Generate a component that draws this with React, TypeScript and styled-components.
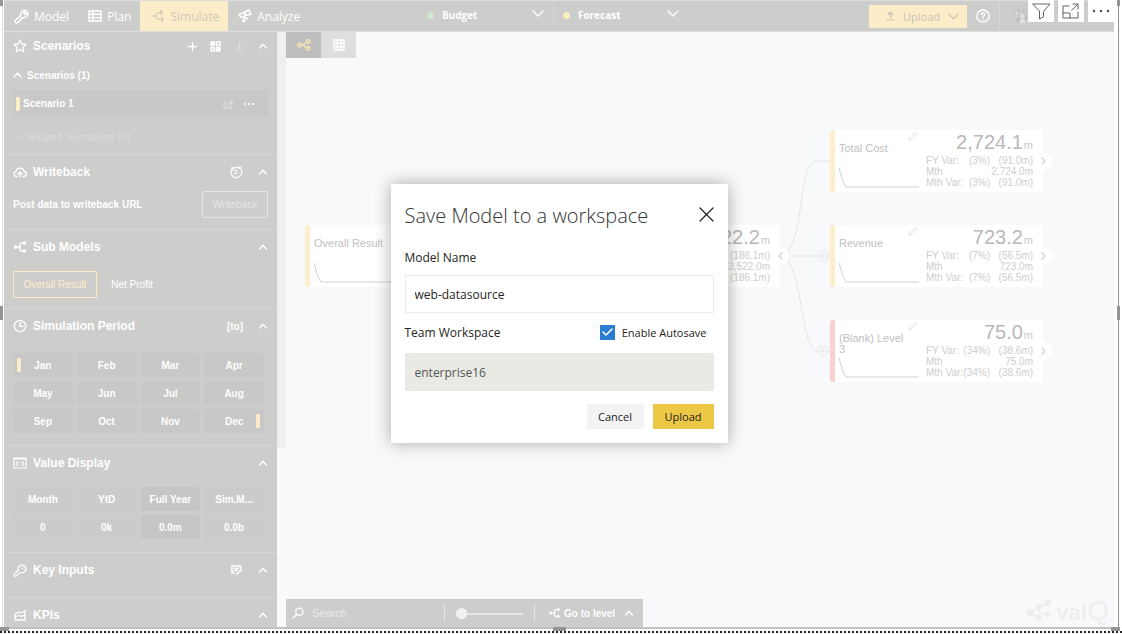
import React from "react";
import styled, { createGlobalStyle } from "styled-components";

const sans = '"Liberation Sans", Arial, sans-serif';
const humanist = '"Open Sans", "Noto Sans", sans-serif';
const grey = "#cdcdcc";
const cream = "#fcedc8";

const Global = createGlobalStyle`
  *, *::before, *::after { box-sizing: border-box; }
  html, body { margin: 0; height: 100%; background: #fff; }
  body { font-family: ${sans}; overflow: hidden; }
  button, input, select { font: inherit; color: inherit; margin: 0; border-radius: 0; }
  button { border: 0; background: none; padding: 0; }
  h1, h2 { margin: 0; }
`;

/* ---------- frame around the visual ---------- */

const Frame = styled.div`
  position: relative;
  display: flex;
  flex-direction: column;
  height: 100vh;
  padding-right: 3px;
`;
const Bordered = styled.div`
  flex: 1;
  min-height: 0;
  display: flex;
  margin-left: 2px;
  padding: 0 4px 0 1px;
  border-left: 1px solid #dcdcdc;
  border-right: 1px solid #8f8f8f;
  border-bottom: 2px solid #c2c2c2;
`;
const DottedEdge = styled.div`
  height: 5px;
  margin-right: -3px;
  border-bottom: 1px solid #fff;
  background: repeating-linear-gradient(90deg, #222 0 2px, #fff 2px 4px) 0 2px / 100% 2px no-repeat;
`;
const Handle = styled.i<{ $x: "left" | "center" | "right"; $y: "top" | "center" | "bottom" }>`
  position: absolute;
  background: #949494;
  width: ${(p) => (p.$y === "bottom" ? (p.$x === "center" ? 13 : 9) : 3)}px;
  height: ${(p) => (p.$y === "bottom" ? 4 : p.$y === "top" ? 6 : 14)}px;
  ${(p) => (p.$x === "left" ? "left: 0;" : p.$x === "right" ? "right: 2px;" : "left: calc(50% - 8px);")}
  ${(p) => (p.$y === "top" ? "top: 0;" : p.$y === "bottom" ? "bottom: 3px;" : "top: calc(50% - 11px);")}
`;
const Visual = styled.div`
  position: relative;
  flex: 1;
  min-width: 0;
  display: flex;
  flex-direction: column;
  overflow: hidden;
  background: #f8f9fb;
`;

/* ---------- top bar ---------- */

const TopBar = styled.header`
  flex: none;
  display: flex;
  align-items: stretch;
  height: 32px;
  background: ${grey};
  border-top: 1px solid #dcdcda;
  border-bottom: 1px solid #dededc;
  color: #fff;
  font-family: ${humanist};
  font-size: 12px;
`;
const Tabs = styled.nav`
  display: flex;
`;
const Tab = styled.button<{ $active?: boolean }>`
  display: flex;
  align-items: center;
  gap: 5px;
  padding: 0 9px 0 ${(p) => (p.$active ? 11 : 10)}px;
  background: ${(p) => (p.$active ? cream : "transparent")};
  color: ${(p) => (p.$active ? "#cfc9b8" : "#fff")};
`;
const Spacer = styled.div<{ $grow: number }>`
  flex: ${(p) => p.$grow};
`;
const Series = styled.label`
  display: flex;
  align-items: center;
  gap: 8px;
  margin: 5px 0 7px;
  padding-left: 9px;
  width: 135px;
  font-size: 10px;
  font-weight: 700;
  & + & { border-left: 1px solid #d6d6d4; }
`;
const Dot = styled.span<{ $color: string }>`
  width: 7px;
  height: 7px;
  border-radius: 50%;
  background: ${(p) => p.$color};
`;
const SeriesSelect = styled.select`
  flex: 1;
  appearance: none;
  border: 0;
  padding: 0;
  background: none;
`;
const SeriesArrow = styled.span`
  display: flex;
  margin: 0 9px 4px 0;
`;
const UploadMenu = styled.button`
  display: flex;
  align-items: center;
  justify-content: space-between;
  align-self: center;
  width: 98px;
  height: 23px;
  padding: 0 8px 0 17px;
  background: ${cream};
  color: #c8c4b8;
  font-size: 11px;
`;
const IconButton = styled.button`
  display: flex;
  align-items: center;
  justify-content: center;
`;
const HelpButton = styled(IconButton)`
  margin-left: 9px;
`;
const Account = styled.div`
  display: flex;
  align-items: center;
  margin: 2px 0 2px 9px;
  padding-left: 13px;
  width: 115px;
  border-left: 1px solid #d6d6d4;
`;
const VisualActions = styled.div`
  position: absolute;
  top: 0;
  right: 0;
  display: flex;
  gap: 4px;
`;
const VisualAction = styled.button`
  display: flex;
  align-items: center;
  justify-content: center;
  width: 26px;
  height: 22px;
  background: #fff;
`;

/* ---------- side panel ---------- */

const Body = styled.div`
  flex: 1;
  min-height: 0;
  display: flex;
`;
const Side = styled.aside`
  flex: none;
  width: 273px;
  overflow: hidden;
  background: ${grey};
  color: #fff;
  font-size: 10px;
  font-weight: 700;
`;
const Track = styled.div`
  flex: none;
  width: 9px;
  background: linear-gradient(#efefef 70%, #fafafa 70%);
`;
const Section = styled.section<{ $pad: number }>`
  padding: 0 9px ${(p) => p.$pad}px;
  border-bottom: 1px solid #d7d7d6;
`;
const SectionHead = styled.div<{ $compact?: boolean }>`
  display: flex;
  align-items: center;
  height: ${(p) => (p.$compact ? 28 : 34)}px;
  gap: 6px;
  h2 { flex: 1; font-size: 12px; font-weight: 700; }
`;
const HeadTools = styled.div`
  display: flex;
  align-items: center;
  gap: 12px;
`;
const WideTool = styled(IconButton)`
  margin-right: 3px;
`;
const Group = styled.button<{ $dim?: boolean }>`
  display: flex;
  align-items: center;
  gap: 5px;
  height: 30px;
  font-size: ${(p) => (p.$dim ? 11 : 10)}px;
  color: ${(p) => (p.$dim ? "#dcdcdb" : "#fff")};
  font-weight: ${(p) => (p.$dim ? 400 : 700)};
`;
const Scenario = styled.div`
  display: flex;
  align-items: center;
  gap: 3px;
  height: 27px;
  margin-bottom: 5px;
  padding: 0 13px 0 3px;
  background: #c8c8c8;
  span { flex: 1; }
`;
const ScenarioTools = styled.div`
  display: flex;
  gap: 9px;
`;
const Marker = styled.i`
  width: 4px;
  height: 14px;
  border-radius: 1px;
  background: ${cream};
`;
const Row = styled.div`
  display: flex;
  align-items: center;
  justify-content: space-between;
  padding-top: 2px;
  p { margin: 0; font-size: 10px; }
`;
const Outline = styled.button`
  width: 66px;
  height: 27px;
  border: 1px solid #e6e6e5;
  border-radius: 2px;
  color: #e6e6e5;
  font-weight: 400;
`;
const Models = styled.div`
  display: flex;
  padding-top: 7px;
`;
const ModelChoice = styled.button<{ $on?: boolean }>`
  width: ${(p) => (p.$on ? 84 : 70)}px;
  height: 27px;
  border: 1px solid ${(p) => (p.$on ? cream : "transparent")};
  border-radius: 1px;
  color: ${(p) => (p.$on ? cream : "#fff")};
  font-weight: 400;
`;
const Grid = styled.div<{ $top: number }>`
  display: grid;
  grid-template-columns: repeat(4, 1fr);
  gap: 4px;
  padding: ${(p) => p.$top}px 4px 0 0;
`;
const Cell = styled.button<{ $on?: boolean; $soft?: boolean }>`
  position: relative;
  height: 24px;
  border-radius: 2px;
  background: ${(p) => (p.$on ? "#c6c6c6" : p.$soft ? "#cbcbcb" : "#c8c8c8")};
  font-size: 10px;
  ${Marker} { position: absolute; top: 5px; }
`;
const StartMarker = styled(Marker)`
  left: 4px;
`;
const EndMarker = styled(Marker)`
  right: 4px;
`;

/* ---------- canvas ---------- */

const Main = styled.main`
  flex: 1;
  min-width: 0;
  display: flex;
  flex-direction: column;
`;
const ViewSwitch = styled.div`
  display: flex;
  flex: none;
`;
const View = styled.button<{ $on?: boolean }>`
  display: flex;
  align-items: center;
  justify-content: center;
  width: 35px;
  height: 26px;
  background: ${(p) => (p.$on ? "#bdbdbd" : "#dedede")};
`;
const Canvas = styled.div`
  position: relative;
  flex: 1;
  min-height: 0;
`;
const Links = styled.svg`
  position: absolute;
  left: 0;
  top: 0;
  overflow: visible;
`;
const NodeBox = styled.article<{ $bar: string }>`
  position: absolute;
  display: flex;
  width: 213px;
  height: 62px;
  padding: 0 10px 0 4px;
  border-left: 5px solid ${(p) => p.$bar};
  border-radius: 3px;
  background: #fff;
  color: #bfbfbf;
`;
const NodeLeft = styled.div`
  width: 80px;
  margin-right: 7px;
  padding: 13px 8px 0 0;
  font-size: 11px;
  line-height: 11px;
`;
const NodeRight = styled.div`
  flex: 1;
  font-size: 10px;
  line-height: 11px;
  color: #cecece;
`;
const Total = styled.div`
  text-align: right;
  font-size: 20px;
  line-height: 25px;
  height: 25px;
  color: #b8b8b8;
  small { font-size: 11px; color: #c8c8c8; margin-left: 1px; }
`;
const Figures = styled.dl`
  display: grid;
  grid-template-columns: 1fr auto 43px;
  margin: 0;
  white-space: nowrap;
  dt { grid-column: 1; width: 34px; }
  dd { margin: 0; text-align: right; }
`;
const Percent = styled.dd`
  grid-column: 2;
`;
const Month = styled.dd`
  grid-column: 2 / 4;
`;
const Pencil = styled.span`
  position: absolute;
  left: 73px;
  top: 1px;
  display: flex;
`;
const Expander = styled.button`
  position: absolute;
  right: -9px;
  top: 22px;
  display: flex;
  align-items: center;
  justify-content: center;
  width: 18px;
  height: 18px;
  border-radius: 50%;
  background: #fff;
`;
const Bottom = styled.footer`
  flex: none;
  display: flex;
  justify-content: space-between;
  padding-right: 5px;
`;
const Tools = styled.div`
  display: flex;
  align-items: center;
  height: 28px;
  width: 357px;
  background: ${grey};
  color: #fff;
  font-size: 11px;
  font-weight: 700;
`;
const SearchBox = styled.label`
  display: flex;
  align-items: center;
  gap: 8px;
  width: 159px;
  height: 18px;
  padding-left: 6px;
  border-right: 1px solid #e6e6e6;
  input {
    width: 110px;
    border: 0;
    padding: 0;
    background: none;
    font-weight: 400;
    outline: 0;
  }
  input::placeholder { color: #e8e8e8; opacity: 1; }
`;
const ZoomBox = styled.label`
  display: flex;
  align-items: center;
  width: 90px;
  height: 18px;
  padding: 0 11px;
  border-right: 1px solid #e6e6e6;
`;
const Range = styled.input`
  appearance: none;
  width: 67px;
  height: 11px;
  background: linear-gradient(#e6e6e6, #e6e6e6) 0 5px / 100% 2px no-repeat;
  &::-webkit-slider-thumb {
    appearance: none;
    width: 11px;
    height: 11px;
    border-radius: 50%;
    background: #f2f2f2;
  }
`;
const LevelButton = styled.button`
  display: flex;
  align-items: center;
  gap: 4px;
  padding-left: 14px;
  font-size: 10px;
  svg:last-child { margin-left: 5px; }
`;
const Logo = styled.div`
  display: flex;
  align-items: center;
  gap: 4px;
  height: 24px;
  color: #edeef0;
  font-family: ${humanist};
  font-size: 22px;
  line-height: 24px;
  font-weight: 600;
  b { font-family: ${sans}; font-size: 28px; line-height: 24px; font-weight: 400; }
`;
const Wordmark = styled.span`
  display: flex;
  align-items: center;
`;

/* ---------- dialog ---------- */

const Overlay = styled.div`
  position: absolute;
  inset: 0;
  display: flex;
  align-items: center;
  justify-content: center;
`;
const Dialog = styled.form`
  width: 337px;
  padding: 14px;
  background: #fff;
  box-shadow: 0 0 16px rgba(0, 0, 0, 0.32);
  color: #252423;
  font-family: ${humanist};
  font-size: 12px;
`;
const DialogHead = styled.div`
  display: flex;
  justify-content: space-between;
  height: 36px;
  h1 { font-size: 20px; line-height: 36px; font-weight: 300; color: #333; }
  button { height: 32px; }
`;
const Line = styled.div`
  display: flex;
  align-items: center;
  justify-content: space-between;
  height: 38px;
  margin-bottom: 2px;
`;
const NameLine = styled(Line)`
  padding-top: 8px;
  margin-bottom: 3px;
`;
const Field = styled.input`
  display: block;
  width: 100%;
  height: 38px;
  padding: 0 9px;
  border: 1px solid #ececec;
  outline: 0;
  &:read-only {
    background: #e9eae4;
    border-color: #e9eae4;
    color: #555;
  }
`;
const Check = styled.label`
  display: flex;
  align-items: center;
  gap: 7px;
  padding-right: 7px;
  font-size: 11px;
  input {
    appearance: none;
    width: 15px;
    height: 15px;
    background: #2b7cd3;
  }
  span { position: relative; display: flex; }
  svg { position: absolute; left: 2px; top: 3px; pointer-events: none; }
`;
const Actions = styled.div`
  display: flex;
  justify-content: flex-end;
  gap: 9px;
  margin-top: 13px;
`;
const Action = styled.button<{ $primary?: boolean }>`
  width: ${(p) => (p.$primary ? 61 : 57)}px;
  height: 25px;
  font-size: 11px;
  background: ${(p) => (p.$primary ? "#ecc846" : "#f3f3f3")};
`;

/* ---------- icons ---------- */

type IconProps = { d?: string; w?: number; h?: number; box?: string; color?: string; sw?: number; children?: React.ReactNode };
const Icon = ({ d, w = 14, h = w, box = `0 0 ${w} ${h}`, color = "currentColor", sw = 1, children }: IconProps) => (
  <svg width={w} height={h} viewBox={box} fill="none" stroke={color} strokeWidth={sw} strokeLinecap="round" strokeLinejoin="round" aria-hidden="true">
    {d && <path d={d} />}
    {children}
  </svg>
);
const Up = () => <Icon w={10} h={6} d="M1.5 5L5 1.2L8.5 5" sw={1.3} />;
const Down = ({ w = 12 }: { w?: number }) => <Icon w={w} h={7} box="0 0 12 7" d="M1 1L6 6L11 1" sw={1.4} />;
const Wrench = () => (
  <Icon w={15} sw={1.5} d="M1.3 11.3L6.6 6.8C6.1 3.3 8.8.8 12.2 1.4L9.7 4L11 5.6L14 3.3C14.4 7 11.8 9.2 8.6 8.5L4 13.6C2 14.6.5 13.1 1.3 11.3Z" />
);
const Key = () => (
  <Icon w={14} h={13} sw={1.3} d="M1 12V10.4L5.2 6.2A4 3.8 0 1 1 7.4 8.4L5.8 9.6L3 12.2Z">
    <path d="M9 4.2H9.6" />
  </Icon>
);
const Share = ({ color = "currentColor" }: { color?: string }) => (
  <Icon w={14} h={12} color={color} sw={1.4}>
    <circle cx="2.5" cy="6" r="1.7" />
    <circle cx="11.3" cy="2.5" r="1.7" />
    <circle cx="11.3" cy="9.5" r="1.7" />
    <path d="M4.2 6H6L9.6 3M6 6L9.6 9" />
  </Icon>
);
const Branch = ({ w = 13 }: { w?: number }) => (
  <Icon w={w} h={12} box="0 0 13 12" sw={1.4}>
    <circle cx="2" cy="6" r="1.2" fill="currentColor" />
    <path d="M2 6H6.5M10 2H8.5Q6.5 2 6.5 4V8Q6.5 10 8.5 10H10" />
    <circle cx="11" cy="2" r="1" fill="currentColor" />
    <circle cx="11" cy="10" r="1" fill="currentColor" />
  </Icon>
);

/* ---------- pieces ---------- */

const PanelHead = ({ icon, title, tools, compact }: { icon: React.ReactNode; title: string; tools?: React.ReactNode; compact?: boolean }) => (
  <SectionHead $compact={compact}>
    {icon}
    <h2>{title}</h2>
    <HeadTools>
      {tools}
      <IconButton aria-label={`Collapse ${title}`}><Up /></IconButton>
    </HeadTools>
  </SectionHead>
);

type NodeData = { x: number; y: number; bar?: string; name?: string; value?: string; pct?: string; variance?: string; month?: string; open?: boolean; leaf?: boolean };
const nodes: NodeData[] = [
  { x: 19, y: 167, name: "Overall Result", leaf: true },
  { x: 281, y: 167, value: "22.2", variance: "(186.1m)", month: "3,522.0m", open: true },
  { x: 544, y: 72, name: "Total Cost", value: "2,724.1", pct: "(3%)", variance: "(91.0m)", month: "2,724.0m" },
  { x: 544, y: 167, name: "Revenue", value: "723.2", pct: "(7%)", variance: "(56.5m)", month: "723.0m" },
  { x: 544, y: 262, name: "(Blank) Level 3", value: "75.0", pct: "(34%)", variance: "(38.6m)", month: "75.0m", bar: "#fad0cf" },
];

const TreeNode = ({ n }: { n: NodeData }) => (
  <NodeBox $bar={n.bar ?? "#fdefcb"} style={{ left: n.x, top: n.y }}>
    <NodeLeft>{n.name}</NodeLeft>
    <Links width="90" height="62">
      <path d="M4 38C6 44 7 52 11 57H84" fill="none" stroke="#d0d2d2" />
    </Links>
    {n.value && (
      <>
        <Pencil><Icon w={10} color="#e2e2e2" d="M1 9L2 6.5L7.5 1L9 2.5L3.5 8Z" /></Pencil>
        <NodeRight>
          <Total>{n.value}<small>m</small></Total>
          <Figures>
            {n.pct && <dt>FY Var:</dt>}
            <Percent>{n.pct}</Percent>
            <dd>{n.variance}</dd>
            {n.pct && <dt>Mth</dt>}
            <Month>{n.month}</Month>
            {n.pct && <dt>Mth Var:</dt>}
            <Percent>{n.pct}</Percent>
            <dd>{n.variance}</dd>
          </Figures>
        </NodeRight>
      </>
    )}
    {!n.leaf && (
      <Expander aria-label="Toggle children">
        <Icon w={5} h={8} color="#cfcfcf" sw={1.2} d={n.open ? "M4 1L1 4L4 7" : "M1 1L4 4L1 7"} />
      </Expander>
    )}
  </NodeBox>
);

const months = ["Jan", "Feb", "Mar", "Apr", "May", "Jun", "Jul", "Aug", "Sep", "Oct", "Nov", "Dec"];
const displays = ["Month", "YtD", "Full Year", "Sim.M...", "0", "0k", "0.0m", "0.0b"];

export default function App() {
  return (
    <Frame>
      <Global />
      <Bordered>
        <Visual>
          <TopBar>
            <Tabs>
              <Tab><Wrench />Model</Tab>
              <Tab>
                <Icon w={14} h={12} sw={1.4} d="M1 1H13V11H1ZM1 4.3H13M1 7.6H13M5 1V11" />
                Plan
              </Tab>
              <Tab $active>
                <Icon w={14} sw={1.2} d="M1 7H5M5 7Q5 3.5 8.5 3.5H11M5 7Q5 10.5 8.5 10.5H12M9.5 1.5L11.5 3.5L9.5 5.5M10.5 8.5L12.5 10.5L10.5 12.5" />
                Simulate
              </Tab>
              <Tab>
                <Icon w={14} sw={1.5} d="M1 5.5L3 8.5L7.5 6.5L6.2 3.5ZM6.2 3.5L10.8 1L13 5.3L7.5 6.5M6.5 7.5V13M6.5 9L4.5 12.5M7 8.5L9.5 10" />
                Analyze
              </Tab>
            </Tabs>
            <Spacer $grow={3} />
            <Series>
              <Dot $color="#d3e6d3" />
              <SeriesSelect aria-label="Primary series"><option>Budget</option></SeriesSelect>
              <SeriesArrow><Down /></SeriesArrow>
            </Series>
            <Series>
              <Dot $color="#fcedc0" />
              <SeriesSelect aria-label="Comparison series"><option>Forecast</option></SeriesSelect>
              <SeriesArrow><Down /></SeriesArrow>
            </Series>
            <Spacer $grow={5} />
            <UploadMenu>
              <Icon w={9} h={10} d="M4.5 7V1M2 3.5L4.5 1L7 3.5M1 9H8" sw={1.2} />
              Upload
              <Down w={11} />
            </UploadMenu>
            <HelpButton aria-label="Help">
              <Icon w={14} sw={1.5} d="M5.3 5.6Q5.3 4 7 4T8.7 5.5Q8.7 6.4 7 7.3V8M7 9.9V10">
                <circle cx="7" cy="7" r="6.1" />
              </Icon>
            </HelpButton>
            <Account>
              <Icon w={16} color="#dfe0e0">
                <circle cx="8" cy="8" r="7" fill="#bfc1c2" stroke="none" />
                <path d="M2 6H13M1.5 9H6M8 2V5M4 3.5V7" />
                <path d="M7 15Q7 11 9.5 11T12 14Z" fill="#ece2dc" />
                <circle cx="9.5" cy="8.5" r="1.8" fill="#ece2dc" />
              </Icon>
            </Account>
          </TopBar>
          <VisualActions>
            <VisualAction aria-label="Filters">
              <Icon w={19} h={17} color="#66606a" d="M1 1H18L11.5 8.5V14L7.5 16V8.5Z" />
            </VisualAction>
            <VisualAction aria-label="Focus mode">
              <Icon w={18} h={16} color="#66606a" d="M7 3H1V15H16V9M1 10H8V15M11 1H16V6M16 1L9.5 7.5" />
            </VisualAction>
            <VisualAction aria-label="More options">
              <Icon w={18} h={4} color="#544c5c" sw={2.4} d="M2 2H2.1M9 2H9.1M16 2H16.1" />
            </VisualAction>
          </VisualActions>

          <Body>
            <Side>
              <Section $pad={2}>
                <PanelHead
                  compact
                  icon={<Icon w={14} sw={1.3} d="M7 1L8.8 5L13 5.4L9.8 8.2L10.8 12.7L7 10.4L3.2 12.7L4.2 8.2L1 5.4L5.2 5Z" />}
                  title="Scenarios"
                  tools={
                    <>
                      <IconButton aria-label="Add scenario"><Icon w={11} sw={1.3} d="M5.5 1.5V9.5M1.5 5.5H9.5" /></IconButton>
                      <IconButton aria-label="Compare scenarios">
                        <Icon w={11} sw={1.5} d="M1 1H4.5V4.5H1ZM6.7 1H10V4.5H6.7ZM1 6.7H4.5V10H1ZM6.7 6.7H10V10H6.7ZM1 4L4 1M7 10L10 7" />
                      </IconButton>
                      <IconButton aria-label="Download"><Icon w={13} h={11} color="#e2e2e2" d="M6.5 1V8M4 5.5L6.5 8L9 5.5M3 10H10" /></IconButton>
                    </>
                  }
                />
                <Group><Icon w={9} h={6} d="M1 5L4.5 1L8 5" sw={1.3} />Scenarios (1)</Group>
                <Scenario>
                  <Marker />
                  <span>Scenario 1</span>
                  <ScenarioTools>
                    <IconButton aria-label="Share scenario">
                      <Icon w={11} h={10} color="#e4e4e4" d="M3 3H1V9H9V7M3.5 7Q4 3.5 9 3.5M7.5 1.5L10 3.5L7.5 5.5" />
                    </IconButton>
                    <IconButton aria-label="Scenario options"><Icon w={12} h={4} sw={2} d="M2 2H2.1M6 2H6.1M10 2H10.1" /></IconButton>
                  </ScenarioTools>
                </Scenario>
                <Group $dim><Icon w={9} h={6} d="M1 1L4.5 5L8 1" />Shared Scenarios (0)</Group>
              </Section>

              <Section $pad={11}>
                <PanelHead
                  icon={<Icon w={14} h={12} sw={1.3} d="M4 10.5H3.5A2.6 2.6 0 0 1 3 5.4A4 4 0 0 1 10.8 5A2.8 2.8 0 0 1 11 10.5H10M7 11V6M5 8L7 6L9 8" />}
                  title="Writeback"
                  tools={
                    <WideTool aria-label="History">
                      <Icon w={13} sw={1.2} d="M2 3.5A5.3 5.3 0 1 0 11 3.5M2 1V4H5M11.5 1H8M6.5 4V7.5H4.5"><path d="M3 2.6Q6.5 0 10.5 3" /></Icon>
                    </WideTool>
                  }
                />
                <Row>
                  <p>Post data to writeback URL</p>
                  <Outline>Writeback</Outline>
                </Row>
              </Section>

              <Section $pad={10}>
                <PanelHead icon={<Branch w={14} />} title="Sub Models" />
                <Models>
                  <ModelChoice $on>Overall Result</ModelChoice>
                  <ModelChoice>Net Profit</ModelChoice>
                </Models>
              </Section>

              <Section $pad={12}>
                <PanelHead
                  icon={<Icon w={14} sw={1.3} d="M7 3V7.4H10"><circle cx="7" cy="7" r="5.6" /></Icon>}
                  title="Simulation Period"
                  tools={<WideTool>[to]</WideTool>}
                />
                <Grid $top={10}>
                  {months.map((m) => (
                    <Cell key={m}>
                      {m === "Jan" && <StartMarker />}
                      {m}
                      {m === "Dec" && <EndMarker />}
                    </Cell>
                  ))}
                </Grid>
              </Section>

              <Section $pad={13}>
                <PanelHead
                  icon={<Icon w={14} h={12} d="M1 1H13V11H1ZM1 2H13M4 5V8.5M3.4 5.3L4 5M7 5.4V5.5M7 8V8.1M10 5V8.5M9.4 5.3L10 5" sw={1.2} />}
                  title="Value Display"
                />
                <Grid $top={7}>
                  {displays.map((d) => (
                    <Cell key={d} $soft $on={d === "Full Year" || d === "0.0m"}>{d}</Cell>
                  ))}
                </Grid>
              </Section>

              <Section $pad={10}>
                <PanelHead
                  icon={<Key />}
                  title="Key Inputs"
                  tools={
                    <WideTool aria-label="Edit inputs">
                      <Icon w={13} h={12} sw={1.6} d="M4 9H2V2H10.5V4M4.5 4.5H8M4.5 6.5H7M6.5 10.5L11.5 5.5" />
                    </WideTool>
                  }
                />
              </Section>

              <Section $pad={0}>
                <PanelHead icon={<Icon w={14} h={12} sw={1.3} d="M2 5V11H12V2M2 5L6 3L8 4L12.5 1.5M2 8L6 6.5L8 7.5L12 6" />} title="KPIs" />
              </Section>
            </Side>
            <Track />

            <Main>
              <ViewSwitch>
                <View $on aria-label="Tree view"><Share color="#f6e6b8" /></View>
                <View aria-label="Table view">
                  <Icon w={12} color="#fff" sw={1.4} d="M1 1H11V11H1ZM1 4.3H11M1 7.7H11M4.3 1V11M7.7 1V11" />
                </View>
              </ViewSwitch>
              <Canvas>
                <Links width="760" height="400" fill="none" stroke="#e2e4e6">
                  <path d="M502 194C518 170 514 103 530 103H544M503 198H544M502 202C518 230 516 293 532 293H544" />
                  <circle cx="537" cy="198" r="5" fill="#f8f9fb" />
                  <circle cx="537" cy="293" r="5" fill="#f8f9fb" />
                  <path d="M534 198H540M537 195V201M534 293H540M537 290V296" />
                </Links>
                {nodes.map((n) => <TreeNode key={`${n.x}-${n.y}`} n={n} />)}
              </Canvas>
              <Bottom>
                <Tools>
                  <SearchBox>
                    <Icon w={12} sw={1.4} d="M1 11L4.6 7.4"><circle cx="7.3" cy="4.7" r="3.6" /></Icon>
                    <input type="text" placeholder="Search" aria-label="Search" />
                  </SearchBox>
                  <ZoomBox><Range type="range" min={0} max={100} defaultValue={0} aria-label="Zoom" /></ZoomBox>
                  <LevelButton><Branch w={11} />Go to level<Up /></LevelButton>
                </Tools>
                <Logo>
                  <Icon w={27} h={24} color="#edeef0" sw={1.5} d="M4 14L13 8L22 4M4 14L13 19M13 8L13 13L21 15">
                    <g fill="#edeef0" stroke="none">
                      <circle cx="4" cy="14" r="3.4" /><circle cx="13" cy="8" r="3" /><circle cx="22" cy="4" r="3.4" />
                      <circle cx="13" cy="19" r="3.4" /><circle cx="21" cy="15" r="3" />
                    </g>
                  </Icon>
                  <Wordmark>val<b>Q</b></Wordmark>
                </Logo>
              </Bottom>
            </Main>
          </Body>

          <Overlay>
            <Dialog role="dialog" aria-labelledby="dialog-title" onSubmit={(e) => e.preventDefault()}>
              <DialogHead>
                <h1 id="dialog-title">Save Model to a workspace</h1>
                <IconButton type="button" aria-label="Close">
                  <Icon w={15} color="#252423" sw={1.3} d="M1 1L14 14M14 1L1 14" />
                </IconButton>
              </DialogHead>
              <NameLine><label htmlFor="model-name">Model Name</label></NameLine>
              <Field id="model-name" type="text" defaultValue="web-datasource" />
              <Line>
                <label htmlFor="workspace">Team Workspace</label>
                <Check>
                  <span>
                    <input type="checkbox" defaultChecked />
                    <Icon w={11} h={9} color="#fff" sw={1.6} d="M1 4L4 7L10 1" />
                  </span>
                  Enable Autosave
                </Check>
              </Line>
              <Field id="workspace" type="text" value="enterprise16" readOnly />
              <Actions>
                <Action type="button">Cancel</Action>
                <Action type="submit" $primary>Upload</Action>
              </Actions>
            </Dialog>
          </Overlay>
        </Visual>
      </Bordered>
      <DottedEdge />
      <Handle $x="left" $y="top" />
      <Handle $x="right" $y="top" />
      <Handle $x="left" $y="center" />
      <Handle $x="right" $y="center" />
      <Handle $x="left" $y="bottom" />
      <Handle $x="center" $y="bottom" />
      <Handle $x="right" $y="bottom" />
    </Frame>
  );
}
